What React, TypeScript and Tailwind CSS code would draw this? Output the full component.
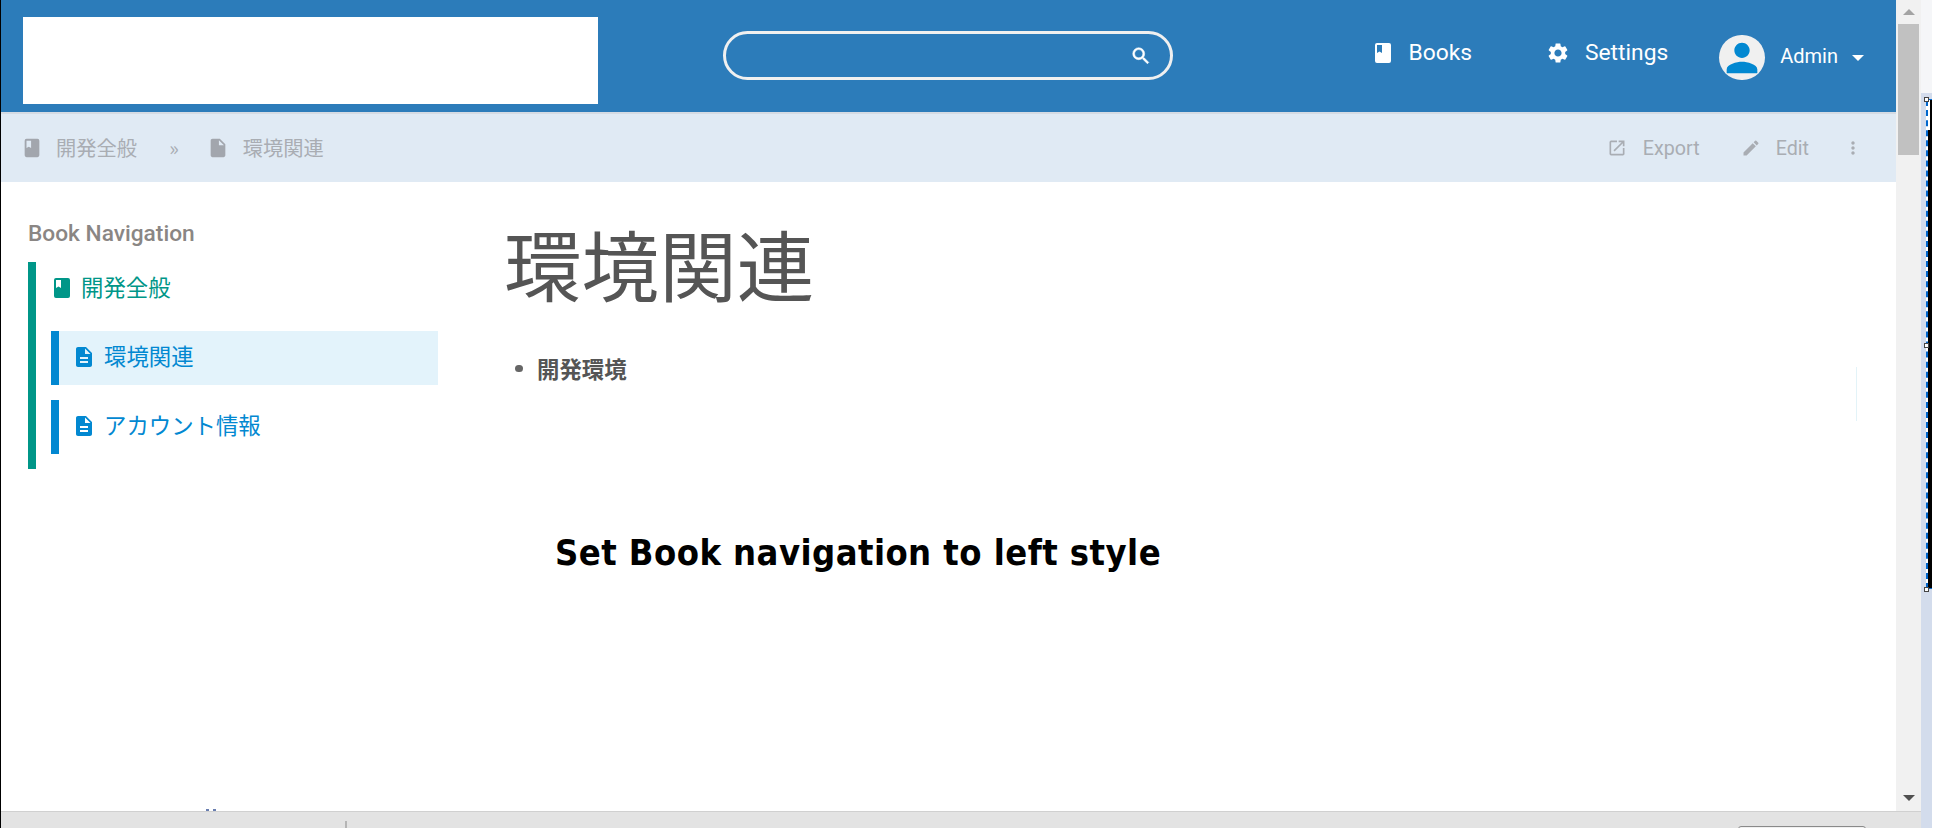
const BOOK = 'M18 2H6a2 2 0 0 0-2 2v16a2 2 0 0 0 2 2h12a2 2 0 0 0 2-2V4a2 2 0 0 0-2-2zM6 4h5v8l-2.5-1.5L6 12V4z';
const PAGE = 'M14 2H6c-1.1 0-1.99.9-1.99 2L4 20c0 1.1.89 2 1.99 2H18c1.1 0 2-.9 2-2V8l-6-6zm2 16H8v-2h8v2zm0-4H8v-2h8v2zm-3-5V3.5L18.5 9H13z';
const PAGE_PLAIN = 'M6 2c-1.1 0-1.99.9-1.99 2L4 20c0 1.1.89 2 1.99 2H18c1.1 0 2-.9 2-2V8l-6-6H6zm7 7V3.5L18.5 9H13z';
const EXPORT = 'M19 19H5V5h7V3H5a2 2 0 0 0-2 2v14a2 2 0 0 0 2 2h14c1.1 0 2-.9 2-2v-7h-2v7zM14 3v2h3.59l-9.83 9.83 1.41 1.41L19 6.41V10h2V3h-7z';
const EDIT = 'M3 17.25V21h3.75L17.81 9.94l-3.75-3.75L3 17.25zM20.71 7.04a1 1 0 0 0 0-1.41l-2.34-2.34a1 1 0 0 0-1.41 0l-1.83 1.83 3.75 3.75 1.83-1.83z';
const DOTS = 'M12 8c1.1 0 2-.9 2-2s-.9-2-2-2-2 .9-2 2 .9 2 2 2zm0 2c-1.1 0-2 .9-2 2s.9 2 2 2 2-.9 2-2-.9-2-2-2zm0 6c-1.1 0-2 .9-2 2s.9 2 2 2 2-.9 2-2-.9-2-2-2z';
const SEARCH = 'M15.5 14h-.79l-.28-.27A6.471 6.471 0 0 0 16 9.5 6.5 6.5 0 1 0 9.5 16c1.61 0 3.09-.59 4.23-1.57l.27.28v.79l5 4.99L20.49 19l-4.99-5zm-6 0C7.01 14 5 11.99 5 9.5S7.01 5 9.5 5 14 7.01 14 9.5 11.99 14 9.5 14z';
const GEAR = 'M19.14 12.94c.04-.3.06-.61.06-.94 0-.32-.02-.64-.07-.94l2.03-1.58a.49.49 0 0 0 .12-.61l-1.92-3.32a.488.488 0 0 0-.59-.22l-2.39.96c-.5-.38-1.03-.7-1.62-.94l-.36-2.54a.484.484 0 0 0-.48-.41h-3.84c-.24 0-.43.17-.47.41l-.36 2.54c-.59.24-1.13.57-1.62.94l-2.39-.96c-.22-.08-.47 0-.59.22L2.74 8.87c-.12.21-.08.47.12.61l2.03 1.58c-.05.3-.09.63-.09.94s.02.64.07.94l-2.03 1.58a.49.49 0 0 0-.12.61l1.92 3.32c.12.22.37.29.59.22l2.39-.96c.5.38 1.03.7 1.62.94l.36 2.54c.05.24.24.41.48.41h3.84c.24 0 .44-.17.47-.41l.36-2.54c.59-.24 1.13-.56 1.62-.94l2.39.96c.22.08.47 0 .59-.22l1.92-3.32c.12-.22.07-.47-.12-.61l-2.01-1.58zM12 15.6c-1.98 0-3.6-1.62-3.6-3.6s1.62-3.6 3.6-3.6 3.6 1.62 3.6 3.6-1.62 3.6-3.6 3.6z';
const PERSON = 'M12 12c2.21 0 4-1.79 4-4s-1.79-4-4-4-4 1.79-4 4 1.79 4 4 4zm0 2c-2.67 0-8 1.34-8 4v2h16v-2c0-2.66-5.33-4-8-4z';

const jp = "font-['Noto_Sans_CJK_JP',sans-serif]";

const Icon = ({ d, className }: { d: string; className: string }) => (
  <svg viewBox="0 0 24 24" fill="currentColor" fillRule="evenodd" className={className}>
    <path d={d} />
  </svg>
);

const Handle = ({ className }: { className: string }) => (
  <div className={`absolute left-[1923px] h-[5px] w-[5px] border border-[#444] bg-white ${className}`} />
);

export default function App() {
  return (
    <div className="relative flex h-[828px] w-[1942px] overflow-hidden border-l border-black bg-white font-['Roboto',sans-serif]">
      <div className="flex w-[1920px] flex-col">
        <div className="flex min-h-0 flex-1">
          <div className="flex w-[1895px] flex-col">
            {/* Header */}
            <header className="flex h-[114px] border-b-2 border-[#d5dbe3] bg-[#2c7cba] pr-[32px] text-white">
              <div className="ml-[22px] mt-[17px] h-[87px] w-[575px] bg-white" />
              <div className="ml-[125px] mt-[31px] flex h-[49px] w-[450px] items-center justify-end rounded-full border-[3px] border-[#f0f0f0] pr-[18px]">
                <Icon d={SEARCH} className="h-[22px] w-[22px] stroke-white stroke-[0.6]" />
              </div>
              <nav className="ml-auto flex items-start">
                <a className="mt-[37px] flex items-center text-[22.8px] leading-[32px]">
                  <Icon d={BOOK} className="h-[24px] w-[24px]" />
                  <span className="ml-[13px]">Books</span>
                </a>
                <a className="ml-[74px] mt-[37px] flex items-center text-[22.8px] leading-[32px]">
                  <Icon d={GEAR} className="h-[24px] w-[24px]" />
                  <span className="ml-[15px]">Settings</span>
                </a>
                <div className="ml-[51px] mt-[35px] flex items-center">
                  <div className="h-[45px] w-[46px] overflow-hidden rounded-full bg-[#f0f0f0]">
                    <Icon d={PERSON} className="h-[46px] w-[46px] text-[#0288d1]" />
                  </div>
                  <span className="mb-[3px] ml-[15px] text-[20px] leading-[28px]">Admin</span>
                  <span className="ml-[14px] h-0 w-0 border-x-[6px] border-t-[6px] border-x-transparent border-t-white" />
                </div>
              </nav>
            </header>

            {/* Breadcrumb bar */}
            <div className={`flex h-[68px] items-center bg-[#e0eaf4] text-[20.3px] text-[#a9adb3] ${jp}`}>
              <Icon d={BOOK} className="ml-[20px] h-[22px] w-[22px] text-[#a2a6ad]" />
              <span className="mb-[2px] ml-[13px]">開発全般</span>
              <span className="ml-[32px] text-[20px]">»</span>
              <Icon d={PAGE_PLAIN} className="ml-[28px] h-[22px] w-[22px] text-[#a2a6ad]" />
              <span className="mb-[2px] ml-[14px]">環境関連</span>
              <div className="ml-auto flex items-center pr-[33px] font-['Roboto',sans-serif] text-[19.7px]">
                <Icon d={EXPORT} className="h-[20px] w-[20px]" />
                <span className="mt-[2px] ml-[16px]">Export</span>
                <Icon d={EDIT} className="ml-[41px] h-[20px] w-[20px]" />
                <span className="mt-[2px] ml-[15px]">Edit</span>
                <Icon d={DOTS} className="ml-[34px] h-[20px] w-[20px]" />
              </div>
            </div>

            {/* Content */}
            <div className="flex min-h-0 flex-1">
              <aside className="w-[503px] shrink-0 pl-[27px]">
                <h5 className="mt-[40px] text-[22.7px] font-medium leading-[24px] text-[#8a8684]">Book Navigation</h5>
                <div className={`mt-[16px] h-[207px] w-[410px] border-l-[8px] border-[#009688] text-[22.4px] ${jp}`}>
                  <div className="flex h-[54px] items-center pl-[14px] text-[#009688]">
                    <Icon d={BOOK} className="mb-[3px] h-[24px] w-[24px]" />
                    <span className="mb-[5px] ml-[7px]">開発全般</span>
                  </div>
                  <div className="ml-[15px] mt-[15px] flex h-[54px] items-center border-l-[8px] border-[#0288d1] bg-[#e3f3fb] pl-[13px] text-[#0288d1]">
                    <Icon d={PAGE} className="mb-[3px] h-[24px] w-[24px]" />
                    <span className="mb-[5px] ml-[8px]">環境関連</span>
                  </div>
                  <div className="ml-[15px] mt-[15px] flex h-[54px] items-center border-l-[8px] border-[#0288d1] pl-[13px] text-[#0288d1]">
                    <Icon d={PAGE} className="mb-[3px] h-[24px] w-[24px]" />
                    <span className="mb-[5px] ml-[8px]">アカウント情報</span>
                  </div>
                </div>
              </aside>
              <main className={`relative min-w-0 flex-1 text-[#555] ${jp}`}>
                <h1 className="mt-[30px] text-[77.6px] font-normal leading-[100px]">環境関連</h1>
                <ul className="ml-[11px] mt-[40px] text-[22.4px] font-bold leading-[32px]">
                  <li className="flex items-center">
                    <span className="h-[7px] w-[8px] rounded-full bg-[#666]" />
                    <span className="ml-[14px]">開発環境</span>
                  </li>
                </ul>
                <h2 className="ml-[51px] mt-[147px] font-['DejaVu_Sans_Condensed','DejaVu_Sans',sans-serif] text-[36px] font-bold leading-[44px] tracking-[0.45px] text-black">
                  Set Book navigation to left style
                </h2>
                <div className="absolute left-[1352px] top-[185px] h-[54px] w-[1px] bg-[#e3f3f8]" />
              </main>
            </div>
          </div>

          {/* Scrollbar */}
          <div className="flex w-[25px] flex-col items-center bg-[#f1f1f1]">
            <span className="mt-[9px] h-0 w-0 border-x-[6px] border-b-[6px] border-x-transparent border-b-[#a3a3a3]" />
            <div className="mt-[9px] h-[131px] w-[21px] bg-[#c1c1c1]" />
            <span className="mt-auto mb-[10px] h-0 w-0 border-x-[6px] border-t-[6px] border-x-transparent border-t-[#505050]" />
          </div>
        </div>

        {/* Status bar */}
        <div className="relative h-[17px] border-t border-[#d0d0d0] bg-[#e3e3e3]">
          <div className="absolute left-[205px] top-[-3px] h-[2px] w-[3px] bg-[#6a7fb0]" />
          <div className="absolute left-[212px] top-[-3px] h-[2px] w-[3px] bg-[#6a7fb0]" />
          <div className="absolute left-[344px] top-[9px] h-[8px] w-[2px] bg-[#b5b5b5]" />
          <div className="absolute left-[1737px] top-[14px] h-[4px] w-[128px] rounded-t-[3px] border border-[#8a8a8a] bg-[#f0f0f0]" />
        </div>
      </div>

      {/* Right gutter */}
      <div className="flex w-[11px] flex-col">
        <div className="h-[93px] bg-[#f5f6f8]" />
        <div className="flex-1 bg-[#d3dcec]" />
      </div>

      {/* Selection overlay */}
      <div className="absolute left-[1925px] top-[99px] h-[490px] w-[6px] border-y border-[#0066cc] bg-black" />
      <div className="absolute left-[1925px] top-[100px] h-[30px] w-[4px] bg-white" />
      <div className="absolute left-[1925px] top-[100px] h-[489px] w-[2px] border-l-2 border-dashed border-[#0066cc] bg-white" />
      <Handle className="top-[97px]" />
      <Handle className="top-[343px]" />
      <Handle className="top-[587px]" />
    </div>
  );
}
